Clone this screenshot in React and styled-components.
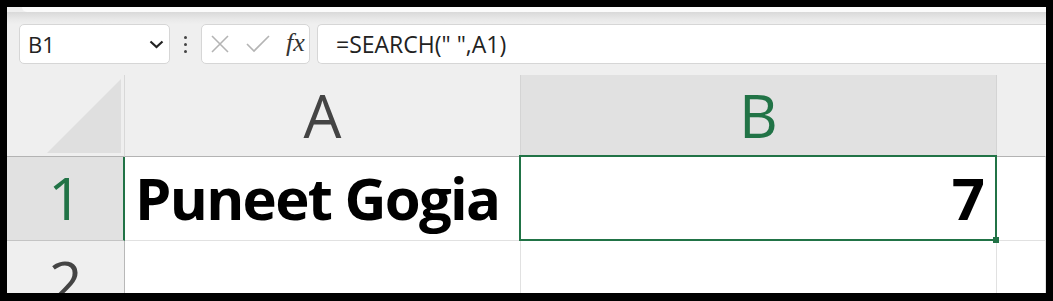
import React from 'react';
import styled, { createGlobalStyle } from 'styled-components';

const Global = createGlobalStyle`
  html, body { margin: 0; padding: 0; background: #000; }
  body { width: 1053px; height: 301px; overflow: hidden; }
`;

const GREEN = '#217346';

const Frame = styled.div`
  box-sizing: border-box;
  width: 1053px;
  height: 301px;
  padding: 7px 7px 8px 7px;
  background: #000;
`;

const Window = styled.div`
  height: 100%;
  background: #efefef;
  display: flex;
  flex-direction: column;
  overflow: hidden;
  font-family: "Open Sans", "Noto Sans", sans-serif;
`;

const RibbonEdge = styled.div`
  flex: none;
  height: 5px;
  margin-left: 15px;
  background: #fbfbfb;
  border-bottom-left-radius: 8px;
`;

const BarArea = styled.div`
  flex: none;
  padding: 12px 0 11px 12px;
  background: linear-gradient(to bottom, #d9d9d9 0px, #e8e8e8 7px, #efefef 12px);
`;

const FormulaBar = styled.div`
  display: flex;
  align-items: stretch;
  height: 40px;
`;

const Box = styled.div`
  box-sizing: border-box;
  display: flex;
  align-items: center;
  background: #fff;
  border: 1px solid #d6d6d6;
  border-radius: 5px;
`;

const NameBox = styled(Box)`
  width: 151px;
  padding: 0 5px 0 8px;
  justify-content: space-between;
  font-size: 22px;
  color: #222;
`;

const Dots = styled.div`
  width: 31px;
  display: flex;
  flex-direction: column;
  align-items: center;
  justify-content: center;
  gap: 4px;
  span {
    width: 3px;
    height: 3px;
    border-radius: 50%;
    background: #444;
  }
`;

const FxBox = styled(Box)`
  width: 109px;
  padding: 0 0 0 8px;
  gap: 16px;
`;

const Fx = styled.span`
  font-family: "Liberation Serif", "DejaVu Serif", serif;
  font-style: italic;
  font-size: 26px;
  color: #333;
  line-height: 1;
  margin-top: -3px;
`;

const FormulaInput = styled(Box)`
  flex: 1;
  margin-left: 7px;
  border-right: none;
  border-radius: 5px 0 0 5px;
  padding-left: 18px;
  font-size: 23px;
  color: #222;
  white-space: pre;
`;

const Grid = styled.div`
  flex: 1;
  display: grid;
  grid-template-columns: 118px 396px 476px 1fr;
  grid-template-rows: 82px 84px 84px;
  position: relative;
`;

const Corner = styled.div`
  box-sizing: border-box;
  border-right: 1px solid #d8d8d8;
  border-bottom: 1px solid #b3b3b3;
  display: flex;
  align-items: flex-end;
  justify-content: flex-end;
  padding: 0 3px 3px 0;
`;

const ColHead = styled.div`
  box-sizing: border-box;
  border-right: 1px solid ${p => (p.$last ? 'transparent' : '#d4d4d4')};
  border-bottom: 1px solid #b3b3b3;
  background: ${p => (p.$active ? '#e1e1e1' : '#efefef')};
  color: ${p => (p.$active ? GREEN : '#444')};
  font-size: 60px;
  line-height: 81px;
  text-align: center;
`;

const RowHead = styled.div`
  box-sizing: border-box;
  border-right: ${p => (p.$active ? `2px solid ${GREEN}` : '1px solid #b8b8b8')};
  border-bottom: 1px solid #c4c4c4;
  background: ${p => (p.$active ? '#e1e1e1' : '#efefef')};
  color: ${p => (p.$active ? GREEN : '#444')};
  font-size: 59px;
  line-height: 81px;
  text-align: center;
`;

const Cell = styled.div`
  box-sizing: border-box;
  background: #fff;
  border-right: 1px solid #e1e1e1;
  border-bottom: 1px solid #e1e1e1;
  font-size: 58px;
  font-weight: 700;
  line-height: 81px;
  color: #000;
  white-space: nowrap;
  text-align: ${p => (p.$right ? 'right' : 'left')};
  padding: ${p => (p.$right ? '0 11px 0 0' : '0 0 0 10px')};
  letter-spacing: ${p => (p.$right ? '0' : '-1.7px')};
  position: relative;
`;

const Selection = styled.div`
  position: absolute;
  left: -2px;
  top: -2px;
  right: -1px;
  bottom: -1px;
  border: 2px solid ${GREEN};
  pointer-events: none;
  z-index: 2;
`;

const Handle = styled.div`
  position: absolute;
  right: -4px;
  bottom: -4px;
  width: 6px;
  height: 6px;
  background: ${GREEN};
`;

const CloseIcon = () => (
  <svg width="20" height="20" viewBox="0 0 20 20">
    <path d="M2 2 L18 18 M18 2 L2 18" stroke="#b4b4b4" strokeWidth="1.6" fill="none" />
  </svg>
);

const CheckIcon = () => (
  <svg width="24" height="18" viewBox="0 0 24 18">
    <path d="M1 9 L8 16 L23 1" stroke="#b4b4b4" strokeWidth="1.6" fill="none" />
  </svg>
);

const Chevron = () => (
  <svg width="15" height="9" viewBox="0 0 15 9">
    <path d="M1.5 1.5 L7.5 7 L13.5 1.5" stroke="#222" strokeWidth="2.2" fill="none" />
  </svg>
);

const CornerTriangle = () => (
  <svg width="74" height="74" viewBox="0 0 74 74">
    <polygon points="0,74 74,0 74,74" fill="#dfdfdf" />
  </svg>
);

export default function App() {
  return (
    <>
      <Global />
      <Frame>
        <Window>
          <RibbonEdge />
          <BarArea>
            <FormulaBar>
              <NameBox>
                <span>B1</span>
                <Chevron />
              </NameBox>
              <Dots>
                <span />
                <span />
                <span />
              </Dots>
              <FxBox>
                <CloseIcon />
                <CheckIcon />
                <Fx>fx</Fx>
              </FxBox>
              <FormulaInput>=SEARCH(" ",A1)</FormulaInput>
            </FormulaBar>
          </BarArea>
          <Grid>
            <Corner>
              <CornerTriangle />
            </Corner>
            <ColHead>A</ColHead>
            <ColHead $active>B</ColHead>
            <ColHead $last />

            <RowHead $active>1</RowHead>
            <Cell>Puneet Gogia</Cell>
            <Cell $right>
              7
              <Selection>
                <Handle />
              </Selection>
            </Cell>
            <Cell />

            <RowHead>2</RowHead>
            <Cell />
            <Cell />
            <Cell />
          </Grid>
        </Window>
      </Frame>
    </>
  );
}
